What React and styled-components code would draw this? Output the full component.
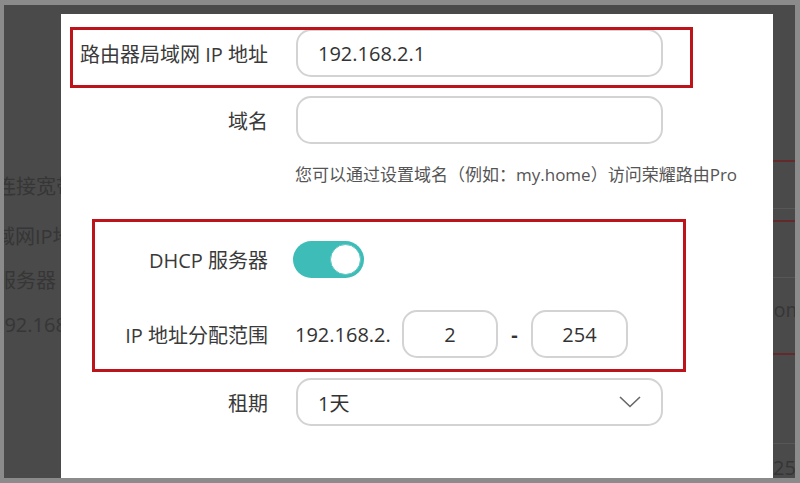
import React from 'react';
import styled, { createGlobalStyle } from 'styled-components';

const GlobalStyle = createGlobalStyle`
    body {
        margin: 0;
        background: #8b8b8b;
        font-family: "Open Sans", "Noto Sans CJK SC", sans-serif;
    }
`;

const Frame = styled.div`
    width: 800px;
    height: 483px;
    box-sizing: border-box;
    padding: 5px 5px 5px 4px;
    background: #8b8b8b;
`;

const Screen = styled.div`
    display: flex;
    height: 100%;
    background: #4a4a4a;
    overflow: hidden;
`;

const SideStrip = styled.div`
    width: ${p => p.$width}px;
    flex-shrink: 0;
    display: flex;
    flex-direction: column;
    overflow: hidden;
    color: #363636;
    font-size: 20px;
`;

const BgLine = styled.div`
    height: 24px;
    line-height: 24px;
    white-space: nowrap;
    margin-top: ${p => p.$mt}px;
    margin-left: ${p => p.$ml || 0}px;
`;

const Rule = styled.div`
    flex-shrink: 0;
    height: ${p => (p.$red ? 2 : 1)}px;
    background: ${p => (p.$red ? '#642a2b' : '#575757')};
    margin-top: ${p => p.$mt}px;
`;

const Modal = styled.div`
    position: relative;
    width: 712px;
    flex-shrink: 0;
    margin-top: 9px;
    padding-top: 15px;
    background: #ffffff;
    display: flex;
    flex-direction: column;
    color: #333333;
    font-size: 20px;
`;

const Row = styled.div`
    display: flex;
    align-items: center;
    height: 48px;
    margin-top: ${p => p.$mt || 0}px;
`;

const Label = styled.div`
    width: 207px;
    margin-right: 28px;
    text-align: right;
    white-space: nowrap;
    color: #3a3a3a;
`;

const TextBox = styled.div`
    box-sizing: border-box;
    width: ${p => p.$width}px;
    height: 48px;
    border: 2px solid #d3d3d3;
    border-radius: 15px;
    display: flex;
    align-items: center;
    justify-content: ${p => (p.$center ? 'center' : 'space-between')};
    padding: ${p => (p.$center ? '0' : '0 20px')};
    color: #333333;
`;

const Hint = styled.div`
    margin: 19px 0 0 234px;
    line-height: 24px;
    font-size: 17px;
    color: #555555;
    white-space: nowrap;
`;

const Toggle = styled.div`
    box-sizing: border-box;
    width: 71px;
    height: 37px;
    margin-left: -3px;
    border-radius: 19px;
    background: #3dbcb8;
    padding: 3px;
    display: flex;
    justify-content: flex-end;
`;

const Knob = styled.div`
    box-sizing: border-box;
    width: 31px;
    height: 31px;
    border-radius: 50%;
    background: #ffffff;
    border: 1px solid #5cc6c2;
`;

const Prefix = styled.span`
    width: 107px;
    margin-left: -1px;
    white-space: nowrap;
`;

const Dash = styled.span`
    width: 33px;
    text-align: center;
    font-weight: 700;
`;

const Highlight = styled.div`
    position: absolute;
    left: ${p => p.$left}px;
    top: ${p => p.$top}px;
    width: ${p => p.$width}px;
    height: ${p => p.$height}px;
    box-sizing: border-box;
    border: 3px solid #bd131b;
    pointer-events: none;
`;

const Chevron = () => (
    <svg width="22" height="12" viewBox="0 0 22 12">
        <polyline points="1,1 11,10.5 21,1" fill="none" stroke="#666" strokeWidth="1.6" />
    </svg>
);

const App = () => {
    return (
        <Frame>
            <GlobalStyle />
            <Screen>
                <SideStrip $width={57}>
                    <BgLine $mt={170} $ml={-8}>连接宽带</BgLine>
                    <BgLine $mt={26} $ml={-9}>域网IP地址</BgLine>
                    <BgLine $mt={20} $ml={-8}>服务器</BgLine>
                    <BgLine $mt={20} $ml={-11}>192.168.2.1</BgLine>
                </SideStrip>

                <Modal>
                    <Row>
                        <Label>路由器局域网 IP 地址</Label>
                        <TextBox $width={367}>192.168.2.1</TextBox>
                    </Row>
                    <Row $mt={19}>
                        <Label>域名</Label>
                        <TextBox $width={367} />
                    </Row>
                    <Hint>您可以通过设置域名（例如：my.home）访问荣耀路由Pro</Hint>
                    <Row $mt={48}>
                        <Label>DHCP 服务器</Label>
                        <Toggle>
                            <Knob />
                        </Toggle>
                    </Row>
                    <Row $mt={27}>
                        <Label>IP 地址分配范围</Label>
                        <Prefix>192.168.2.</Prefix>
                        <TextBox $width={96} $center>2</TextBox>
                        <Dash>-</Dash>
                        <TextBox $width={97} $center>254</TextBox>
                    </Row>
                    <Row $mt={20}>
                        <Label>租期</Label>
                        <TextBox $width={367}>
                            <span>1天</span>
                            <Chevron />
                        </TextBox>
                    </Row>

                    <Highlight $left={9} $top={13} $width={623} $height={61} />
                    <Highlight $left={31} $top={205} $width={594} $height={153} />
                </Modal>

                <SideStrip $width={22}>
                    <Rule $red $mt={155} />
                    <Rule $mt={46} />
                    <Rule $red $mt={11} />
                    <Rule $mt={55} />
                    <BgLine $mt={20} $ml={-9}>com</BgLine>
                    <Rule $red $mt={31} />
                    <Rule $mt={88} />
                    <BgLine $mt={12}>25</BgLine>
                </SideStrip>
            </Screen>
        </Frame>
    );
};

export default App;
